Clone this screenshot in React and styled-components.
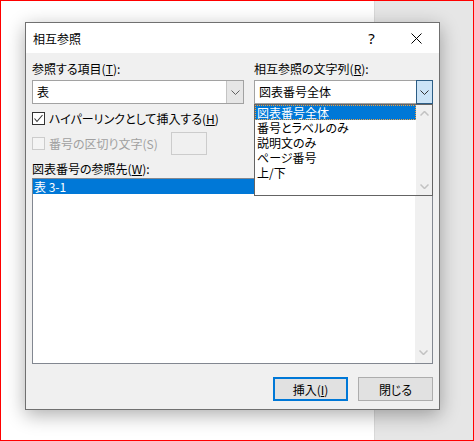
import styled, { createGlobalStyle } from "styled-components";

const GlobalStyle = createGlobalStyle`
  html, body {
    margin: 0;
    padding: 0;
  }
  body {
    font-family: "Noto Sans CJK JP", "Noto Sans", sans-serif;
    font-size: 12px;
    font-feature-settings: "palt" 1;
    color: #000;
  }
  * {
    box-sizing: border-box;
  }
`;

const stringItems = ["図表番号全体", "番号とラベルのみ", "説明文のみ", "ページ番号", "上/下"];

const Chevron = ({ up, color = "#606060", weight = 1 }) => (
  <svg width="9" height="5" viewBox="0 0 9 5">
    <polyline
      points={up ? "0.5,4.5 4.5,0.5 8.5,4.5" : "0.5,0.5 4.5,4.5 8.5,0.5"}
      fill="none"
      stroke={color}
      strokeWidth={weight}
    />
  </svg>
);

const CloseIcon = () => (
  <svg width="11" height="11" viewBox="0 0 11 11">
    <path d="M0.5 0.5 L10.5 10.5 M10.5 0.5 L0.5 10.5" stroke="#000" strokeWidth="1" />
  </svg>
);

const CheckMark = () => (
  <svg width="11" height="11" viewBox="0 0 11 11">
    <polyline points="1.5,5.5 4,8.5 9.5,2" fill="none" stroke="#333" strokeWidth="1.1" />
  </svg>
);

const App = () => {
  return (
    <>
      <GlobalStyle />
      <Screen>
        <DocPage />
        <SidePane />
        <Dialog>
          <TitleBar>
            <Title>相互参照</Title>
            <CaptionButton>?</CaptionButton>
            <CaptionButton>
              <CloseIcon />
            </CaptionButton>
          </TitleBar>
          <Body>
            <TopGrid>
              <Field>
                <Label>
                  参照する項目(<u>T</u>):
                </Label>
                <Combo>
                  <ComboText>表</ComboText>
                  <ComboButton>
                    <Chevron />
                  </ComboButton>
                </Combo>
              </Field>
              <Field>
                <Label>
                  相互参照の文字列(<u>R</u>):
                </Label>
                <Combo>
                  <ComboText>図表番号全体</ComboText>
                  <ComboButton $active>
                    <Chevron color="#333" />
                  </ComboButton>
                  <DropList>
                    <Items>
                      {stringItems.map((t, i) => (
                        <Item key={t} $selected={i === 0}>
                          {t}
                        </Item>
                      ))}
                    </Items>
                    <ScrollBar>
                      <Arrow>
                        <Chevron up color="#c2c2c2" weight={1.5} />
                      </Arrow>
                      <Arrow>
                        <Chevron color="#c2c2c2" weight={1.5} />
                      </Arrow>
                    </ScrollBar>
                  </DropList>
                </Combo>
              </Field>
            </TopGrid>

            <CheckRow>
              <CheckBox>
                <CheckMark />
              </CheckBox>
              <span>
                ハイパーリンクとして挿入する(<u>H</u>)
              </span>
            </CheckRow>

            <CheckRow $disabled $tall>
              <CheckBox $disabled />
              <span>番号の区切り文字(S)</span>
              <SmallInput />
            </CheckRow>

            <ListLabel>
              図表番号の参照先(<u>W</u>):
            </ListLabel>
            <ListBox>
              <Rows>
                <Row $selected>表 3-1</Row>
              </Rows>
              <ListScroll>
                <Arrow>
                  <Chevron up color="#c2c2c2" weight={1.5} />
                </Arrow>
                <Arrow>
                  <Chevron color="#c2c2c2" weight={1.5} />
                </Arrow>
              </ListScroll>
            </ListBox>

            <Buttons>
              <Button $primary>
                挿入(<u>I</u>)
              </Button>
              <Button>閉じる</Button>
            </Buttons>
          </Body>
        </Dialog>
      </Screen>
    </>
  );
};

export default App;

const Screen = styled.div`
  position: relative;
  width: 474px;
  height: 441px;
  border: 1px solid #ff0000;
  display: flex;
  overflow: hidden;
`;

const DocPage = styled.div`
  width: 374px;
  background: #ffffff;
  border-right: 1px solid #d9d9d9;
`;

const SidePane = styled.div`
  flex: 1;
  background: #e6e6e6;
`;

const Dialog = styled.div`
  position: absolute;
  left: 24px;
  top: 21px;
  width: 415px;
  height: 388px;
  border: 1px solid #707070;
  background: #f0f0f0;
  box-shadow: 0 5px 18px rgba(0, 0, 0, 0.32);
  display: flex;
  flex-direction: column;
`;

const TitleBar = styled.div`
  height: 30px;
  background: #ffffff;
  display: flex;
  align-items: center;
  padding-left: 7px;
`;

const Title = styled.div`
  flex: 1;
  font-size: 12px;
`;

const CaptionButton = styled.div`
  width: 45px;
  height: 30px;
  display: flex;
  align-items: center;
  justify-content: center;
  font-family: "Noto Sans", sans-serif;
  font-size: 15px;
`;

const Body = styled.div`
  flex: 1;
  display: flex;
  flex-direction: column;
  padding: 8px 6px 8px 6px;
`;

const TopGrid = styled.div`
  display: grid;
  grid-template-columns: 212px 179px;
  column-gap: 10px;
`;

const Field = styled.div`
  display: flex;
  flex-direction: column;
`;

const Label = styled.div`
  line-height: 15px;
  margin-bottom: 4px;
  white-space: nowrap;
`;

const Combo = styled.div`
  position: relative;
  height: 24px;
  display: flex;
  border: 1px solid #a2a2a2;
  background: #ffffff;
`;

const ComboText = styled.div`
  flex: 1;
  padding-left: 4px;
  line-height: 22px;
  white-space: nowrap;
`;

const ComboButton = styled.div`
  width: 17px;
  display: flex;
  align-items: center;
  justify-content: center;
  background: ${(p) => (p.$active ? "#cce4f7" : "#e6e6e6")};
  border-left: 1px solid ${(p) => (p.$active ? "#2c5d85" : "#c4c4c4")};
  ${(p) =>
    p.$active &&
    `
    margin: -1px -1px -1px 0;
    width: 17px;
    border: 1px solid #2c5d85;
  `}
`;

const DropList = styled.div`
  position: absolute;
  top: calc(100% + 1px);
  left: -1px;
  right: -1px;
  height: 92px;
  border: 1px solid #646464;
  background: #ffffff;
  display: flex;
  z-index: 2;
`;

const Items = styled.ul`
  flex: 1;
  list-style: none;
  margin: 0;
  padding: 0;
`;

const Item = styled.li`
  height: 15px;
  line-height: 15px;
  padding-left: 2px;
  white-space: nowrap;
  background: ${(p) => (p.$selected ? "#0078d7" : "transparent")};
  color: ${(p) => (p.$selected ? "#ffffff" : "#000000")};
  outline: ${(p) => (p.$selected ? "1px dotted #f0a040" : "none")};
  outline-offset: -1px;
`;

const ScrollBar = styled.div`
  width: 16px;
  background: #f0f0f0;
  display: flex;
  flex-direction: column;
  justify-content: space-between;
`;

const Arrow = styled.div`
  height: 17px;
  display: flex;
  align-items: center;
  justify-content: center;
`;

const CheckRow = styled.div`
  display: flex;
  align-items: center;
  gap: 4px;
  height: ${(p) => (p.$tall ? "23px" : "13px")};
  margin-top: ${(p) => (p.$tall ? "7px" : "8px")};
  line-height: 15px;
  white-space: nowrap;
  color: ${(p) => (p.$disabled ? "#a0a0a0" : "#000")};
`;

const CheckBox = styled.div`
  width: 13px;
  height: 13px;
  flex: none;
  display: flex;
  align-items: center;
  justify-content: center;
  border: 1px solid ${(p) => (p.$disabled ? "#cccccc" : "#333333")};
  background: ${(p) => (p.$disabled ? "#f4f4f4" : "#ffffff")};
`;

const SmallInput = styled.div`
  width: 36px;
  height: 23px;
  margin-left: 9px;
  border: 1px solid #cccccc;
  background: #f0f0f0;
`;

const ListLabel = styled.div`
  line-height: 15px;
  margin-top: 6px;
`;

const ListBox = styled.div`
  flex: 1;
  margin-top: 2px;
  display: flex;
  border: 1px solid #828790;
  background: #ffffff;
`;

const Rows = styled.div`
  flex: 1;
`;

const Row = styled.div`
  height: 15px;
  line-height: 15px;
  padding-left: 1px;
  white-space: pre;
  background: ${(p) => (p.$selected ? "#0078d7" : "transparent")};
  color: ${(p) => (p.$selected ? "#ffffff" : "#000")};
`;

const ListScroll = styled.div`
  width: 17px;
  background: #f0f0f0;
  display: flex;
  flex-direction: column;
  justify-content: space-between;
  padding-bottom: 2px;
`;

const Buttons = styled.div`
  display: flex;
  justify-content: flex-end;
  gap: 10px;
  margin-top: 13px;
`;

const Button = styled.div`
  width: 75px;
  height: 24px;
  display: flex;
  align-items: center;
  justify-content: center;
  background: #e1e1e1;
  border: 1px solid ${(p) => (p.$primary ? "#0078d7" : "#adadad")};
  box-shadow: ${(p) => (p.$primary ? "inset 0 0 0 1px #0078d7" : "none")};
`;
